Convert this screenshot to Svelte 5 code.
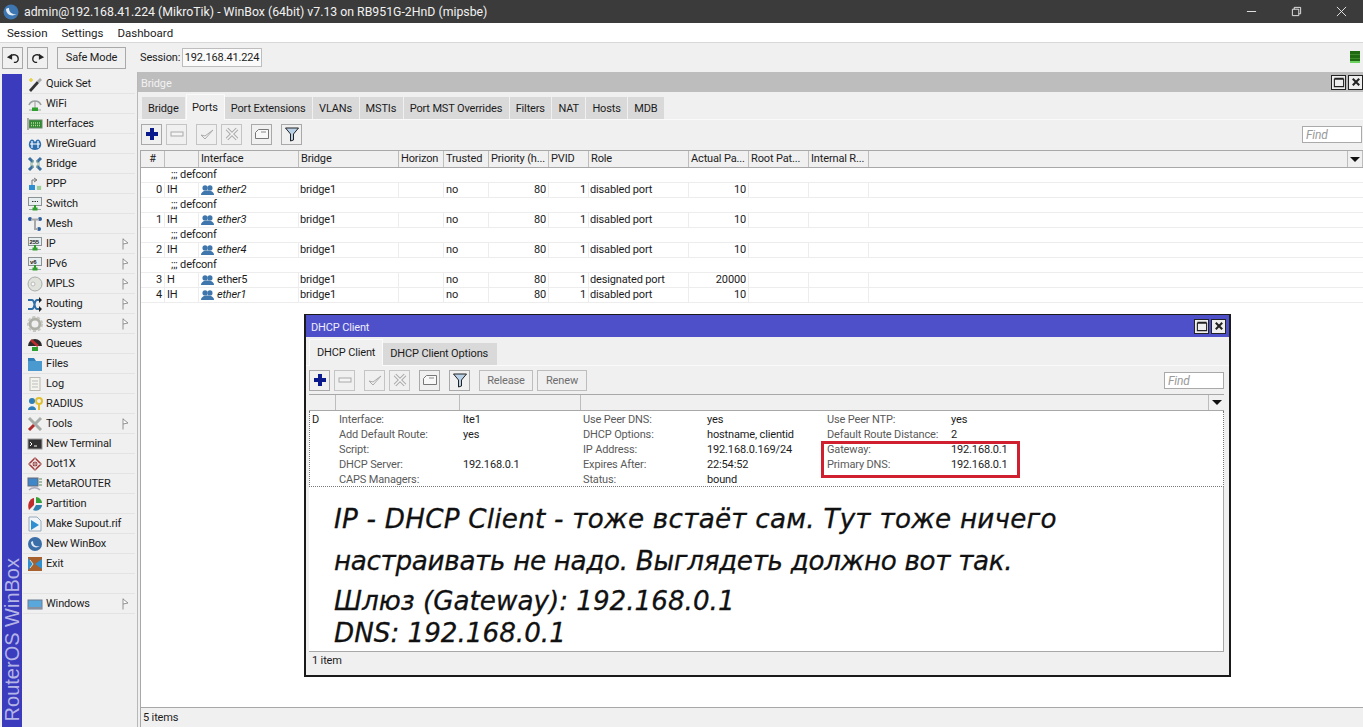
<script>
  const monitor = '<rect x="1.5" y="1.5" width="13" height="8" fill="#e8eef0" stroke="#8a9296"/><path d="M8 9v3" stroke="#2a9a2a" stroke-width="2"/><path d="M2 13.5h12" stroke="#9aa" /><rect x="5.5" y="11.5" width="5" height="3" fill="#2f9f2f"/>';
  const icons = {
    quickset: '<path d="M2 14 10 5l2 2-8 9z" fill="#333"/><path d="M10 5l3-3 2 2-3 3z" fill="#aaa"/><path d="M4 2v4M2 4h4" stroke="#e8d040" stroke-width="1.5"/>',
    wifi: '<path d="M2 9a6.5 6.5 0 0 1 12 0" fill="#eee" stroke="#98a2a0" stroke-width="1.6"/><path d="M8 5v7" stroke="#999"/><path d="M2 14h12" stroke="#9a9"/><rect x="5" y="11.5" width="6" height="3.5" fill="#2f9f2f"/>',
    interfaces: '<rect x="2" y="4" width="13" height="8" fill="#2f8a2f" stroke="#6a8a6a"/><path d="M4 7h9M4 9.500h9" stroke="#b8d8a0" stroke-width="1.5" stroke-dasharray="1 1"/><path d="M1 2v12" stroke="#aaa" stroke-width="2"/>',
    wireguard: '<path d="M2 7c1-4 4-5 6-1 2-4 5-3 6 1 1 4-2 7-6 7S1 11 2 7z" fill="#2f6fb0"/><path d="M5 5v7M11 5v7M3 8h10" stroke="#fff" stroke-width="1.2"/>',
    bridge: '<path d="M2 2l4 4M14 2l-4 4M2 14l4-4M14 14l-4-4" stroke="#3a6f9f" stroke-width="3"/><path d="M3 7h3V4M13 7h-3V4M3 9h3v3M13 9h-3v3" stroke="#8a9" fill="none"/>',
    ppp: '<rect x="2" y="9" width="6" height="5" fill="#2f8fd0"/><rect x="9" y="9" width="6" height="5" fill="#e4ece4"/><path d="M10 11h4M10 13h4" stroke="#5a5"/><path d="M5 9V4h4M7 2l3 2-3 2" stroke="#777" fill="none"/>',
    switch: monitor + '<path d="M5 5.500h6" stroke="#333" stroke-dasharray="1.500 1"/>',
    mesh: '<circle cx="3" cy="3" r="2" fill="#2b5f9f"/><circle cx="13" cy="3" r="2" fill="#2b5f9f"/><circle cx="12" cy="13" r="2" fill="#2b5f9f"/><path d="M4 3.500h8M8 4v9h3" stroke="#a8a8a8" stroke-width="2" fill="none"/>',
    ip: monitor + '<text x="2.500" y="8" font-size="6" font-family="Liberation Sans" font-weight="700" fill="#222">255</text>',
    ipv6: monitor + '<text x="3" y="8" font-size="6" font-family="Liberation Sans" font-weight="700" fill="#222">v6</text>',
    mpls: '<circle cx="8" cy="8" r="7" fill="#dfe3dc" stroke="#a8aca8"/><circle cx="6" cy="8" r="2" fill="#f8f8f8" stroke="#bbb"/>',
    routing: '<path d="M1 13h4c3 0 2-9 5-9h3M1 4h4c3 0 2 9 5 9h3" fill="none" stroke="#2f6fa8" stroke-width="2"/><path d="M12 1l3 3-3 3zM12 10l3 3-3 3z" fill="#222"/>',
    system: '<circle cx="8" cy="8" r="5" fill="none" stroke="#aeb0a8" stroke-width="3"/><circle cx="8" cy="8" r="7" fill="none" stroke="#c4c6c0" stroke-width="2" stroke-dasharray="3 2"/>',
    queues: '<path d="M1 10a7 7 0 0 1 14 0z" fill="#2c2c2c"/><path d="M4 4l7 6" stroke="#c02c2c" stroke-width="2.500"/><rect x="5" y="11" width="6" height="4" fill="#2f9f2f"/>',
    files: '<path d="M1 2h6l2 3h6v10H1z" fill="#2f7fb8"/><path d="M1 5h14v10H1z" fill="#4a9ad0"/>',
    log: '<rect x="3" y="1.500" width="10" height="13" fill="#f4f4ee" stroke="#b8b8b0"/><path d="M5 5h6M5 8h6M5 11h6" stroke="#bbb"/>',
    radius: '<circle cx="5" cy="5" r="3" fill="#2f7fb8"/><path d="M1 14c0-5 8-5 8 0z" fill="#2f7fb8"/><circle cx="12" cy="5" r="3" fill="none" stroke="#e0c030" stroke-width="2"/><path d="M12 8v6" stroke="#e0c030" stroke-width="2"/>',
    tools: '<path d="M2 2l12 12" stroke="#a8aca8" stroke-width="3"/><path d="M14 2L8 8" stroke="#a8aca8" stroke-width="3"/><path d="M7 9l-5 5" stroke="#b02c2c" stroke-width="3"/>',
    terminal: '<rect x="1" y="3" width="14" height="10" fill="#333" stroke="#999"/><path d="M3 6l2 2-2 2M7 10h3" stroke="#fff" fill="none"/>',
    dot1x: '<path d="M8 2l6 6-6 6-6-6z" fill="none" stroke="#a03838" stroke-width="1.500"/><circle cx="8" cy="8" r="2.500" fill="#a03838"/><path d="M8 1v14M1 8h14" stroke="#ddd" stroke-width=".7"/>',
    metarouter: '<rect x="1" y="2" width="10" height="8" fill="#3f87c8" stroke="#667"/><path d="M12 3h3M12 6h3M12 9h3" stroke="#5a8a5a"/><path d="M2 14c3-3 8-3 11 0" fill="none" stroke="#aab" stroke-width="1.500"/>',
    partition: '<path d="M7 2v7l-5 5C0 9 2 3 7 2z" fill="#c02c2c"/><path d="M9 1c3 0 6 3 6 6H9z" fill="#38a038"/><path d="M9 9h6c0 4-5 7-9 5z" fill="#2f7fb0"/>',
    supout: '<path d="M2 1h8l4 4v10H2z" fill="#f2f5f7" stroke="#9ab"/><path d="M4 4l8 5-8 5z" fill="#2f8fd0"/>',
    newwinbox: '<circle cx="8" cy="8" r="7" fill="#3a6ea8"/><path d="M4 6c0 5 5 7 9 4-3 1-7 0-7-5" fill="#dfe8f2"/>',
    exit: '<rect x="1" y="1" width="14" height="14" fill="#a8602c"/><path d="M1 2l6 6-6 6M8 8l7-5v10z" fill="#2f8fd0"/><path d="M3 4l3 4-3 4" fill="none" stroke="#f0d8b0"/>',
    windows: '<rect x="1" y="4" width="14" height="9" fill="#5aa7dc" stroke="#6a7c90"/><path d="M1 12h14" stroke="#8890a0" stroke-width="2"/>'
  };

  const menu = [
    ['Quick Set', 'quickset'], ['WiFi', 'wifi'], ['Interfaces', 'interfaces'], ['WireGuard', 'wireguard'],
    ['Bridge', 'bridge'], ['PPP', 'ppp'], ['Switch', 'switch'], ['Mesh', 'mesh'],
    ['IP', 'ip', true], ['IPv6', 'ipv6', true], ['MPLS', 'mpls', true], ['Routing', 'routing', true],
    ['System', 'system', true], ['Queues', 'queues'], ['Files', 'files'], ['Log', 'log'],
    ['RADIUS', 'radius'], ['Tools', 'tools', true], ['New Terminal', 'terminal'], ['Dot1X', 'dot1x'],
    ['MetaROUTER', 'metarouter'], ['Partition', 'partition'], ['Make Supout.rif', 'supout'],
    ['New WinBox', 'newwinbox'], ['Exit', 'exit'], ['', ''], ['Windows', 'windows', true]
  ];

  const bridgeTabs = ['Bridge', 'Ports', 'Port Extensions', 'VLANs', 'MSTIs', 'Port MST Overrides', 'Filters', 'NAT', 'Hosts', 'MDB'];
  const headers = ['#', '', 'Interface', 'Bridge', 'Horizon', 'Trusted', 'Priority (h...', 'PVID', 'Role', 'Actual Pa...', 'Root Pat...', 'Internal R...'];
  const ports = [
    { comment: true, n: 0, flags: 'IH', name: 'ether2', off: true, role: 'disabled port', cost: 10 },
    { comment: true, n: 1, flags: 'IH', name: 'ether3', off: true, role: 'disabled port', cost: 10 },
    { comment: true, n: 2, flags: 'IH', name: 'ether4', off: true, role: 'disabled port', cost: 10 },
    { comment: true, n: 3, flags: 'H', name: 'ether5', off: false, role: 'designated port', cost: 20000 },
    { comment: false, n: 4, flags: 'IH', name: 'ether1', off: true, role: 'disabled port', cost: 10 }
  ];
  const details = [
    ['Interface:', 'lte1', 'Use Peer DNS:', 'yes', 'Use Peer NTP:', 'yes'],
    ['Add Default Route:', 'yes', 'DHCP Options:', 'hostname, clientid', 'Default Route Distance:', '2'],
    ['Script:', '', 'IP Address:', '192.168.0.169/24', 'Gateway:', '192.168.0.1'],
    ['DHCP Server:', '192.168.0.1', 'Expires After:', '22:54:52', 'Primary DNS:', '192.168.0.1'],
    ['CAPS Managers:', '', 'Status:', 'bound', '', '']
  ];
</script>

{#snippet tools(extra)}
  <button class="tb plus"><svg viewBox="0 0 16 16"><path d="M8 2v12M2 8h12" stroke="#0a1a8c" stroke-width="4"/></svg></button>
  <button class="tb dim"><svg viewBox="0 0 16 16"><rect x="2" y="6" width="12" height="4" fill="#f4f4f4" stroke="#aaa"/></svg></button>
  <button class="tb dim gap"><svg viewBox="0 0 16 16"><path d="M2 9l4 4 8-9-8 6z" fill="#f4f4f4" stroke="#aaa"/></svg></button>
  <button class="tb dim"><svg viewBox="0 0 16 16"><path d="M3 3l10 10M13 3L3 13" stroke="#aaa" stroke-width="3.500"/><path d="M3 3l10 10M13 3L3 13" stroke="#f4f4f4" stroke-width="1.500"/></svg></button>
  <button class="tb gap"><svg viewBox="0 0 16 16"><path d="M1.500 12.500v-6l3-3h10v9z" fill="#f8f8f8" stroke="#777"/><path d="M7 6h5" stroke="#888"/></svg></button>
  <button class="tb gap"><svg viewBox="0 0 16 16"><path d="M1.500 2h13L9.500 8v6l-3 1V8z" fill="#b8d0e8" stroke="#222"/></svg></button>
  {@render extra?.()}
{/snippet}

{#snippet winBtns()}
  <div class="winbtns">
    <span class="wb"><svg viewBox="0 0 13 13"><path d="M1.500 3.500h10v8h-10zM1.500 2.500h10" fill="none" stroke="#222" stroke-width="1.200"/></svg></span>
    <span class="wb"><svg viewBox="0 0 13 13"><path d="M3 3l7 7M10 3l-7 7" stroke="#222" stroke-width="2.200"/></svg></span>
  </div>
{/snippet}

<div class="app">
  <header class="os-title">
    <svg class="logo" viewBox="0 0 16 16"><circle cx="8" cy="8" r="7.500" fill="#3d76b0"/><path d="M3 5c0 6 6 8 11 5-4 1-8-1-8-6-1 0-2 0-3 1z" fill="#e4edf6"/></svg>
    <span class="os-text">admin@192.168.41.224 (MikroTik) - WinBox (64bit) v7.13 on RB951G-2HnD (mipsbe)</span>
    <div class="os-btns">
      <svg viewBox="0 0 12 12"><path d="M1 6h10" stroke="#eee"/></svg>
      <svg viewBox="0 0 12 12"><path d="M1.500 3.500h7v7h-7zM3.500 3.500v-2h7v7h-2" fill="none" stroke="#eee"/></svg>
      <svg viewBox="0 0 12 12"><path d="M1 1l10 10M11 1L1 11" stroke="#eee"/></svg>
    </div>
  </header>

  <nav class="menubar"><span>Session</span><span>Settings</span><span>Dashboard</span></nav>

  <div class="mainbar">
    <button class="tb small"><svg viewBox="0 0 16 16"><path d="M5 6c3-3 9-2 9 3 0 3-3 4-5 4" fill="none" stroke="#222" stroke-width="1.500"/><path d="M1 7l6-4v7z" fill="#222"/></svg></button>
    <button class="tb small"><svg viewBox="0 0 16 16"><path d="M11 6C8 3 2 4 2 9c0 3 3 4 5 4" fill="none" stroke="#222" stroke-width="1.500"/><path d="M15 7L9 3v7z" fill="#222"/></svg></button>
    <button class="tb safe">Safe Mode</button>
    <span class="sess">Session:</span>
    <span class="sess-input">192.168.41.224</span>
    <span class="led"></span>
  </div>

  <div class="body">
    <div class="strip"><span>RouterOS WinBox</span></div>
    <ul class="side">
      {#each menu as [label, icon, sub]}
        <li>
          {#if icon}<svg class="ic" viewBox="0 0 16 16">{@html icons[icon]}</svg>{/if}
          <span>{label}</span>
          {#if sub}<svg class="sub" viewBox="0 0 7 12"><path d="M1 0.500v11M1 1l5 4-5 1" fill="#fff" stroke="#888" stroke-width=".9"/></svg>{/if}
        </li>
      {/each}
    </ul>

    <main class="desk">
      <section class="bridge">
        <div class="win-title grey"><span>Bridge</span>{@render winBtns()}</div>
        <div class="tabs">
          {#each bridgeTabs as t}
            <span class="tab" class:on={t === 'Ports'}>{t}</span>
          {/each}
        </div>
        <div class="toolbar">
          {@render tools()}
          <span class="find">Find</span>
        </div>
        <div class="table">
          <div class="row head cols">
            {#each headers as h, i}<span class:ctr={i === 0}>{h}</span>{/each}
            <span class="rest"></span>
            <span class="drop"><i></i></span>
          </div>
          {#each ports as p}
            {#if p.comment}<div class="row comment">;;; defconf</div>{/if}
            <div class="row cols body-row">
              <span class="num">{p.n}</span>
              <span>{p.flags}</span>
              <span class="ifc" class:off={p.off}><svg viewBox="0 0 16 12"><circle cx="5" cy="3.500" r="3.200" fill="#3f76ac"/><circle cx="11" cy="3.500" r="3.200" fill="#3f76ac"/><path d="M0 12c0-7 16-7 16 0z" fill="#3f76ac"/></svg>{p.name}</span>
              <span>bridge1</span>
              <span></span>
              <span>no</span>
              <span class="num">80</span>
              <span class="num">1</span>
              <span>{p.role}</span>
              <span class="num">{p.cost}</span>
              <span></span>
              <span></span>
            </div>
          {/each}
        </div>
        <div class="fill"></div>
        <footer class="status main">5 items</footer>
      </section>

      <section class="dhcp">
        <div class="win-title blue"><span>DHCP Client</span>{@render winBtns()}</div>
        <div class="tabs d">
          <span class="tab on">DHCP Client</span>
          <span class="tab">DHCP Client Options</span>
        </div>
        <div class="toolbar d">
          {#snippet extra()}
            <button class="tb txt first">Release</button>
            <button class="tb txt">Renew</button>
          {/snippet}
          {@render tools(extra)}
          <span class="find">Find</span>
        </div>
        <div class="dhead">
          <span style="width:27px"></span><span style="width:124px"></span><span style="width:121px"></span>
          <span class="rest"></span><span class="drop"><i></i></span>
        </div>
        <div class="entry">
          <span class="flag">D</span>
          <div class="grid">
            {#each details as r}
              {#each r as c, i}<span class:val={i % 2 === 1}>{c}</span>{/each}
            {/each}
          </div>
          <div class="redbox"></div>
        </div>
        <div class="note">
          <p class="l1">IP - DHCP Client - тоже встаёт сам. Тут тоже ничего</p>
          <p class="l2">настраивать не надо. Выглядеть должно вот так.</p>
          <p class="l3">Шлюз (Gateway): 192.168.0.1</p>
          <p class="l4">DNS: 192.168.0.1</p>
        </div>
        <footer class="status d">1 item</footer>
      </section>
    </main>
  </div>
</div>

<style>
  :global(body) { margin: 0; background: #f0f0f0; overflow: hidden; }
  .app {
    width: 1363px; height: 727px; display: flex; flex-direction: column; overflow: hidden;
    font: 11px Roboto, "Liberation Sans", sans-serif; letter-spacing: -.15px; color: #1c1c1c; background: #f0f0f0;
  }
  svg { display: block; }

  .os-title { height: 23px; background: #3b3b3b; color: #f2f2f2; display: flex; align-items: center; flex: none; letter-spacing: 0; }
  .logo { width: 16px; height: 16px; margin: 0 5px 0 3px; }
  .os-text { font: 12.3px Roboto, sans-serif; }
  .os-btns { margin-left: auto; display: flex; gap: 34px; margin-right: 16px; }
  .os-btns svg { width: 11px; height: 11px; }

  .menubar { height: 19px; background: #fff; display: flex; gap: 14px; padding-left: 7px; align-items: center; flex: none; font-size: 11.5px; letter-spacing: 0; }

  .mainbar { height: 30px; flex: none; display: flex; align-items: center; border-top: 1px solid #d8d8d8; padding-left: 2px; position: relative; box-sizing: border-box; }
  .tb {
    width: 21px; height: 21px; padding: 1px; box-sizing: border-box; flex: none; background: #f0f0f0;
    border: 1px solid #a9a9a9; border-radius: 0; display: flex; align-items: center; justify-content: center;
    font: inherit; letter-spacing: inherit; color: inherit; margin-right: 4px;
  }
  .tb svg { width: 16px; height: 16px; }
  .tb.small { height: 22px; }
  .tb.small svg { width: 14px; height: 14px; }
  .tb.safe { width: 69px; height: 22px; margin-left: 5px; margin-right: 14px; }
  .tb.dim { border-color: #c4c4c4; }
  .tb.gap { margin-left: 5px; }
  .tb.txt { width: 54px; color: #6e6e6e; border-color: #bdbdbd; }
  .tb.txt.first { margin-left: 5px; }
  .tb.txt + .tb.txt { width: 50px; }
  .sess { width: 42px; }
  .sess-input { width: 78px; height: 17px; line-height: 17px; border: 1px solid #bdbdbd; background: #fafafa; text-align: center; }
  .led { position: absolute; right: 3px; top: 8px; width: 10px; height: 12px; background: repeating-linear-gradient(#1f6a10 0 3px, #3c8a2c 3px 4px); border-bottom: 2px solid #6ad060; box-sizing: border-box; }

  .body { flex: 1; display: flex; min-height: 0; position: relative; }
  .strip { width: 20px; margin: 2px 0 0 2px; background: #3b3bbd; flex: none; display: flex; align-items: flex-end; justify-content: center; padding-bottom: 6px; box-sizing: border-box; }
  .strip span { writing-mode: vertical-rl; transform: rotate(180deg); color: #b4b4e6; font: 20px "Liberation Sans", sans-serif; letter-spacing: 0; white-space: nowrap; }
  .side { list-style: none; margin: 0; padding: 2px 1px 0; width: 114px; box-sizing: border-box; flex: none; }
  .side li { height: 20px; box-sizing: border-box; border-bottom: 1px solid #e3e3e3; display: flex; align-items: center; position: relative; padding-left: 4px; }
  .ic { width: 16px; height: 16px; margin-right: 3px; flex: none; }
  .sub { position: absolute; right: 6px; top: 4px; width: 7px; height: 12px; }

  .desk { flex: 1; min-width: 0; border-left: 1px solid #b8b8b8; margin-left: 1px; position: relative; }
  .bridge { height: 100%; display: flex; flex-direction: column; }
  .win-title { display: flex; align-items: center; flex: none; color: #f2f2f2; padding-left: 3px; }
  .win-title.grey { height: 20px; background: #bdbdbd; }
  .win-title.grey > span { padding-top: 2px; }
  .win-title.blue { height: 22px; background: #4d50c8; padding-left: 5px; color: #eef; }
  .win-title.blue > span { padding-top: 3px; }
  .winbtns { margin-left: auto; display: flex; gap: 2px; }
  .wb { width: 15px; height: 15px; box-sizing: border-box; border: 1px solid #222; background: #eee; display: flex; align-items: center; justify-content: center; }
  .wb svg { width: 12px; height: 12px; }
  .blue .winbtns { margin-right: 3px; }

  .tabs { display: flex; height: 27px; flex: none; padding: 0 0 0 4px; align-items: flex-end; border-bottom: 1px solid #fafafa; }
  .tab { height: 22px; line-height: 24px; padding: 0 6.5px 0 6px; background: #d9d9d9; border-right: 1px solid #f0f0f0; box-sizing: border-box; white-space: nowrap; }
  .tab.on { height: 26px; line-height: 26px; background: #f0f0f0; border: 1px solid #fafafa; border-bottom: 0; padding: 0 6px 0 5px; margin-bottom: -1px; }
  .toolbar { height: 30px; flex: none; display: flex; align-items: center; padding: 0 0 2px 3px; box-sizing: border-box; }
  .find { margin-left: auto; width: 60px; height: 17px; line-height: 16px; box-sizing: border-box; border: 1px solid #aaa; background: #fff; color: #9a9a9a; font-style: italic; padding-left: 3px; font-size: 12px; margin-right: 1px; }

  .table { flex: none; background: #fff; margin-left: 2px; border: solid #a8a8a8; border-width: 1px 0 0 1px; }
  .row { height: 15px; line-height: 14px; box-sizing: border-box; border-bottom: 1px solid #ededed; white-space: nowrap; }
  .cols { display: grid; grid-template-columns: 24px 34px 100px 100px 45px 45px 60px 40px 100px 60px 60px 60px 1fr 15px; }
  .cols > span { padding: 0 2px; border-right: 1px solid #ededed; overflow: hidden; min-width: 0; box-sizing: border-box; }
  .body-row > span:nth-child(4), .body-row > span:nth-child(9) { padding-left: 1px; }
  .row.head { height: 17px; line-height: 16px; background: #f0f0f0; border-bottom: 1px solid #a8a8a8; }
  .head > span { border-right-color: #bdbdbd; }
  .ctr { text-align: center; }
  .num { text-align: right; }
  .comment { padding-left: 30px; }
  .ifc { display: flex; align-items: center; gap: 3px; }
  .ifc svg { width: 13px; height: 10px; flex: none; }
  .ifc.off { font-style: italic; }
  .drop { display: flex; align-items: center; justify-content: center; }
  .drop i { border: 5px solid transparent; border-top: 5px solid #111; border-bottom: 0; }
  .fill { flex: 1; background: #fff; margin-left: 2px; border-left: 1px solid #a8a8a8; }
  .status { height: 20px; line-height: 19px; flex: none; border-top: 1px solid #a8a8a8; padding-left: 3px; box-sizing: border-box; }
  .status.main { margin-left: 2px; border-left: 1px solid #a8a8a8; padding-left: 2px; }

  .dhcp {
    position: absolute; left: 166px; top: 242px; width: 927px; height: 363px; box-sizing: border-box;
    border: 2px solid #1a1a1a; border-width: 1px 2px 2px 2px; background: #f0f0f0; display: flex; flex-direction: column; z-index: 2;
  }
  .tabs.d { height: 28px; padding-left: 3px; }
  .tabs.d .tab { padding: 0 9px 0 7px; line-height: 22px; }
  .tabs.d .tab.on { height: 27px; padding: 0 7px; line-height: 26px; }
  .toolbar.d { height: 28px; padding: 0 0 0 3px; }
  .toolbar.d .find { margin-right: 5px; }
  .dhead { height: 17px; flex: none; display: flex; margin: 0 5px 0 3px; border: solid #a8a8a8; border-width: 1px 0; box-sizing: border-box; }
  .dhead > span { border-right: 1px solid #bdbdbd; box-sizing: border-box; flex: none; }
  .dhead .rest { flex: 1; border-right: 1px solid #bdbdbd; }
  .dhead .drop { width: 15px; border: 0; }
  .entry { height: 76px; flex: none; position: relative; background: #fff; margin: 0 5px 0 3px; border: 1px dotted #777; border-top: 0; box-sizing: border-box; display: flex; }
  .flag { width: 27px; padding-left: 2px; line-height: 15px; padding-top: 1px; box-sizing: border-box; flex: none; }
  .grid { display: grid; grid-template-columns: 124px 120px 124px 120px 124px 1fr; grid-auto-rows: 15px; line-height: 15px; padding: 1px 0 0 2px; flex: 1; color: #5a5a5a; }
  .val { color: #1c1c1c; }
  .redbox { position: absolute; left: 511px; top: 30px; width: 199px; height: 37px; border: 3px solid #d01f2e; box-sizing: border-box; }
  .note { flex: 1; background: #fff; margin: 0 5px 0 3px; padding-left: 25px; border-right: 1px solid #a8a8a8; font: italic 26.2px "DejaVu Sans", sans-serif; letter-spacing: 0; -webkit-text-stroke: .3px #111; color: #111; min-height: 0; overflow: hidden; }
  .note p { margin: 0; white-space: nowrap; line-height: 32px; }
  .l1 { padding-top: 16px; letter-spacing: .24px; }
  .l2 { padding-top: 10px; letter-spacing: -.32px; }
  .l3 { padding-top: 8px; }
  .status.d { height: 19px; line-height: 18px; margin: 0 5px 5px 3px; padding-left: 3px; border-top: 1px solid #a8a8a8; background: #f0f0f0; }
</style>
